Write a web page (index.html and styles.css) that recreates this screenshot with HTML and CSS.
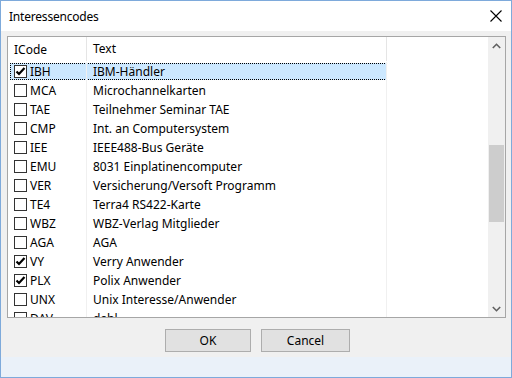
FILE: index.html
```html
<!DOCTYPE html>
<html>
<head>
<meta charset="utf-8">
<link rel="stylesheet" href="styles.css">
</head>
<body>
<div class="window">
  <div class="titlebar">
    <span class="title">Interessencodes</span>
    <svg class="close" width="12" height="12" viewBox="0 0 12 12"><path d="M0.5 0.5 L11.5 11.5 M11.5 0.5 L0.5 11.5" stroke="#000" stroke-width="1.1" fill="none"/></svg>
  </div>
  <div class="content">
    <div class="list">
      <div class="grid">
        <div class="header">
          <div class="c1">ICode</div>
          <div class="c2">Text</div>
          <div class="c3"></div>
        </div>
        <div class="rows">
          <div class="row selected"><div class="c1"><span class="cb on"><svg width="11" height="11" viewBox="0 0 11 11"><path d="M1.5 5.5 L4 8 L9.5 2" stroke="#000" stroke-width="2.2" fill="none"/></svg></span>IBH</div><div class="c2">IBM-Händler</div><div class="c3"></div></div>
          <div class="row"><div class="c1"><span class="cb"></span>MCA</div><div class="c2">Microchannelkarten</div><div class="c3"></div></div>
          <div class="row"><div class="c1"><span class="cb"></span>TAE</div><div class="c2">Teilnehmer Seminar TAE</div><div class="c3"></div></div>
          <div class="row"><div class="c1"><span class="cb"></span>CMP</div><div class="c2">Int. an Computersystem</div><div class="c3"></div></div>
          <div class="row"><div class="c1"><span class="cb"></span>IEE</div><div class="c2">IEEE488-Bus Geräte</div><div class="c3"></div></div>
          <div class="row"><div class="c1"><span class="cb"></span>EMU</div><div class="c2">8031 Einplatinencomputer</div><div class="c3"></div></div>
          <div class="row"><div class="c1"><span class="cb"></span>VER</div><div class="c2">Versicherung/Versoft Programm</div><div class="c3"></div></div>
          <div class="row"><div class="c1"><span class="cb"></span>TE4</div><div class="c2">Terra4 RS422-Karte</div><div class="c3"></div></div>
          <div class="row"><div class="c1"><span class="cb"></span>WBZ</div><div class="c2">WBZ-Verlag Mitglieder</div><div class="c3"></div></div>
          <div class="row"><div class="c1"><span class="cb"></span>AGA</div><div class="c2">AGA</div><div class="c3"></div></div>
          <div class="row"><div class="c1"><span class="cb on"><svg width="11" height="11" viewBox="0 0 11 11"><path d="M1.5 5.5 L4 8 L9.5 2" stroke="#000" stroke-width="2.2" fill="none"/></svg></span>VY</div><div class="c2">Verry Anwender</div><div class="c3"></div></div>
          <div class="row"><div class="c1"><span class="cb on"><svg width="11" height="11" viewBox="0 0 11 11"><path d="M1.5 5.5 L4 8 L9.5 2" stroke="#000" stroke-width="2.2" fill="none"/></svg></span>PLX</div><div class="c2">Polix Anwender</div><div class="c3"></div></div>
          <div class="row"><div class="c1"><span class="cb"></span>UNX</div><div class="c2">Unix Interesse/Anwender</div><div class="c3"></div></div>
          <div class="row"><div class="c1"><span class="cb"></span>DAV</div><div class="c2">dahl</div><div class="c3"></div></div>
        </div>
      </div>
      <div class="scrollbar">
        <div class="sbtn"><svg width="9" height="6" viewBox="0 0 9 6"><path d="M0.8 5 L4.5 1.3 L8.2 5" stroke="#606060" stroke-width="1.6" fill="none"/></svg></div>
        <div class="track"><div class="thumb"></div></div>
        <div class="sbtn"><svg width="9" height="6" viewBox="0 0 9 6"><path d="M0.8 1 L4.5 4.7 L8.2 1" stroke="#606060" stroke-width="1.6" fill="none"/></svg></div>
      </div>
    </div>
    <div class="buttons">
      <button class="btn ok">OK</button>
      <button class="btn cancel">Cancel</button>
    </div>
  </div>
  <div class="strip"></div>
</div>
</body>
</html>
```

FILE: styles.css
```css
html, body {
  margin: 0;
  padding: 0;
  background: #ffffff;
}
body {
  font-family: "Noto Sans", "Open Sans", sans-serif;
  font-size: 12px;
  color: #000;
}
.window {
  width: 512px;
  height: 378px;
  box-sizing: border-box;
  border: 1px solid #7eaadb;
  background: #f0f0f0;
  display: flex;
  flex-direction: column;
}
.titlebar {
  height: 30px;
  flex: none;
  background: #fff;
  display: flex;
  align-items: center;
  padding-left: 8px;
  padding-right: 9px;
}
.title {
  flex: 1;
  font-size: 12px;
  letter-spacing: -0.2px;
}
.close {
  display: block;
}
.content {
  flex: none;
  height: 326px;
  padding: 5px 0 0 6px;
  box-sizing: border-box;
  display: flex;
  flex-direction: column;
}
.list {
  width: 499px;
  height: 282px;
  box-sizing: border-box;
  border: 1px solid #a6a6a6;
  background: #fff;
  display: flex;
  flex: none;
}
.grid {
  flex: 1;
  overflow: hidden;
  display: flex;
  flex-direction: column;
}
.header, .row {
  display: flex;
  flex: none;
}
.header {
  height: 25px;
  align-items: flex-start;
}
.header .c1, .header .c2 {
  height: 24px;
  line-height: 23px;
  box-sizing: border-box;
  border-right: 1px solid #e5e5e5;
}
.c1 {
  width: 79px;
  box-sizing: border-box;
  padding-left: 6px;
  display: flex;
  align-items: center;
  white-space: nowrap;
}
.c2 {
  width: 300px;
  box-sizing: border-box;
  padding-left: 6px;
  white-space: nowrap;
  overflow: hidden;
}
.c3 {
  flex: 1;
}
.rows {
  flex: 1;
  overflow: hidden;
  position: relative;
}
.row {
  height: 19px;
  line-height: 19px;
  position: relative;
}
.row .c1, .row .c2 {
  border-right: 1px solid #f0f0f0;
  height: 19px;
}
.row.selected::before {
  content: "";
  position: absolute;
  left: 2px;
  top: 1px;
  width: 377px;
  height: 17px;
  box-sizing: border-box;
  background: #cce8ff;
  border: 1px dotted #000;
}
.row.selected .c1, .row.selected .c2 {
  position: relative;
}
.cb {
  width: 13px;
  height: 13px;
  box-sizing: border-box;
  border: 1px solid #333;
  background: #fff;
  margin-right: 3px;
  display: inline-flex;
  align-items: center;
  justify-content: center;
  flex: none;
}
.cb svg {
  display: block;
}
.scrollbar {
  width: 17px;
  flex: none;
  background: #f0f0f0;
  display: flex;
  flex-direction: column;
}
.sbtn {
  height: 17px;
  flex: none;
  display: flex;
  align-items: center;
  justify-content: center;
}
.track {
  flex: 1;
}
.thumb {
  margin: 91px 1px 0 1px;
  height: 77px;
  background: #cdcdcd;
}
.buttons {
  display: flex;
  padding-left: 158px;
  padding-top: 11px;
  gap: 10px;
}
.btn {
  height: 23px;
  box-sizing: border-box;
  border: 1px solid #adadad;
  background: #e1e1e1;
  font-family: "Noto Sans", "Open Sans", sans-serif;
  font-size: 12px;
  color: #000;
  padding: 0;
  margin: 0;
}
.ok {
  width: 86px;
}
.cancel {
  width: 89px;
}
.strip {
  flex: 1;
  background: #eaf1f9;
}
```
